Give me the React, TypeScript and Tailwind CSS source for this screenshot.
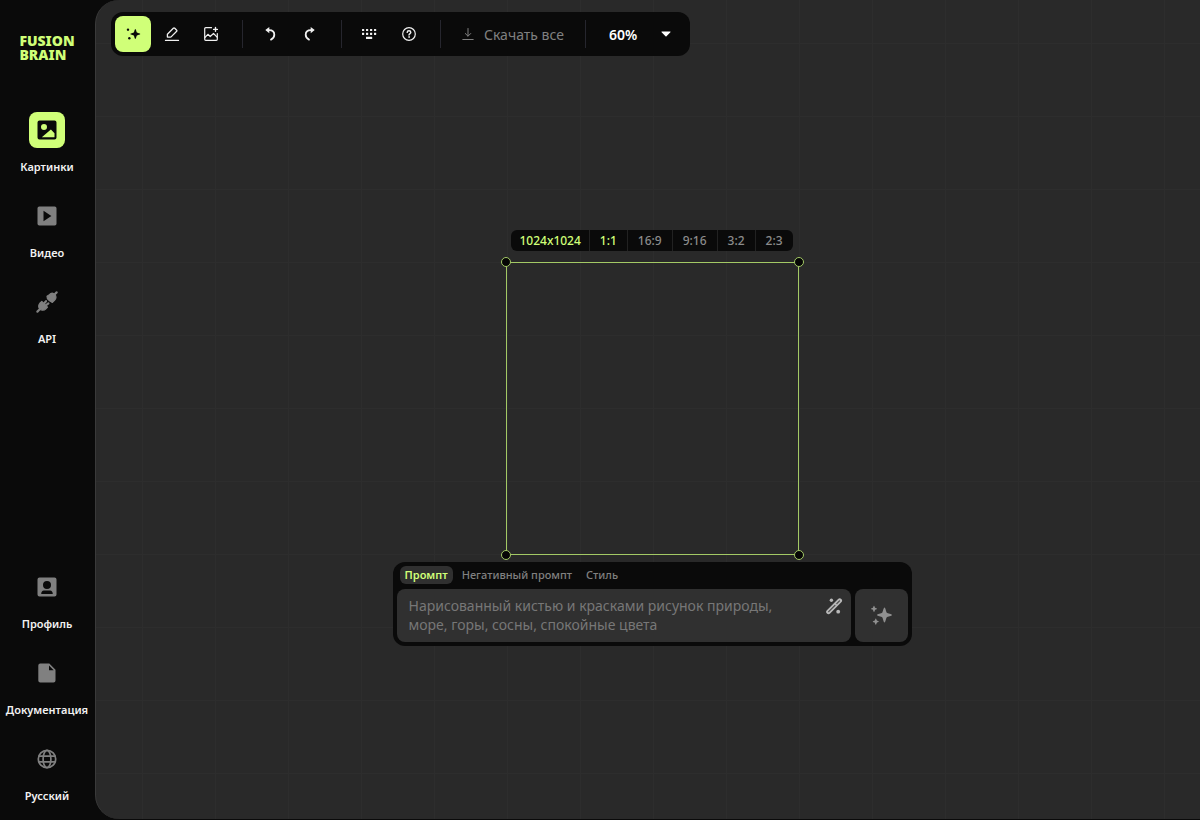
import React, { useState } from "react";

type IconProps = { className?: string };

const SparkleIcon = ({ className, dots = false }: IconProps & { dots?: boolean }) => (
  <svg viewBox="0 0 24 24" className={className} fill="currentColor" aria-hidden="true">
    <path d="M15.500 4.500C16.500 4.500 17.100 9 17.800 9.700 18.500 10.400 23 11 23 12 23 13 18.500 13.600 17.800 14.300 17.100 15 16.500 19.500 15.500 19.500 14.500 19.500 13.900 15 13.200 14.300 12.500 13.600 8 13 8 12 8 11 12.500 10.400 13.200 9.700 13.900 9 14.500 4.500 15.500 4.500z" />
    {dots ? (
      <>
        <circle cx="4.500" cy="5.500" r="1.800" />
        <circle cx="6.500" cy="18.300" r="1.800" />
      </>
    ) : (
      <>
        <path d="M5 2.700c.6 0 .7 1.700 1.100 2 .3.400 2 .5 2 1.100s-1.700.7-2 1.100c-.4.300-.5 2-1.100 2s-.7-1.700-1.100-2c-.3-.4-2-.5-2-1.100s1.700-.7 2-1.100c.4-.3.5-2 1.100-2z" />
        <path d="M6.800 15.500c.6 0 .7 1.700 1.100 2 .3.400 2 .5 2 1.100s-1.700.7-2 1.100c-.4.300-.5 2-1.100 2s-.7-1.700-1.100-2c-.3-.4-2-.5-2-1.100s1.700-.7 2-1.100c.4-.3.5-2 1.100-2z" />
      </>
    )}
  </svg>
);

const EraserIcon = () => (
  <svg viewBox="0 0 16 16" className="size-4" fill="none" stroke="currentColor" strokeWidth="1.300" strokeLinejoin="round" strokeLinecap="round" aria-hidden="true">
    <path d="M1.500 14.400h13" />
    <path d="M9.300 2.300 3.400 8.200v2.900h2.900l.8-.2 5.600-5.600a.8.8 0 0 0 0-1.100l-1.900-1.900a1.100 1.100 0 0 0-1.500 0z" />
  </svg>
);

const AddImageIcon = () => (
  <svg viewBox="0 0 16 16" className="size-4" fill="none" stroke="currentColor" strokeWidth="1.200" strokeLinejoin="round" strokeLinecap="round" aria-hidden="true">
    <path d="M8.500 1.700H2.700a1 1 0 0 0-1 1v10.600a1 1 0 0 0 1 1h10.600a1 1 0 0 0 1-1V7.500" />
    <path d="m1.900 11.500 3-3.200 2.300 2.200 3.300-3 3.600 3.600" />
    <path d="M12.500 1.500v3.800M10.600 3.400h3.800" strokeWidth="1.400" />
  </svg>
);

const UndoIcon = ({ className }: IconProps) => (
  <svg viewBox="0 0 16 16" className={className} fill="none" aria-hidden="true">
    <path d="M5.500 4.200h1.700c3.200 0 5.100 2 5.100 4.600 0 2-1.100 3.700-3.300 4.800" stroke="currentColor" strokeWidth="1.800" strokeLinecap="round" />
    <path d="M3.300 4.100 7.300.9v6.400z" fill="currentColor" />
  </svg>
);

const KeyboardIcon = () => (
  <svg viewBox="0 0 16 16" className="size-4" fill="currentColor" aria-hidden="true">
    {[2.900, 6.700].map((y) =>
      [1, 5, 9, 13].map((x) => <rect key={`${x}-${y}`} x={x} y={y} width="2.200" height="2.200" rx=".3" />)
    )}
    <rect x="5" y="10.800" width="6.200" height="2.200" rx=".3" />
  </svg>
);

const HelpIcon = () => (
  <svg viewBox="0 0 16 16" className="size-4" fill="none" stroke="currentColor" strokeWidth="1.200" strokeLinecap="round" aria-hidden="true">
    <circle cx="8" cy="8" r="6.300" />
    <path d="M6.200 6.400c0-1 .8-1.700 1.800-1.700s1.800.7 1.800 1.700C9.800 7.500 8 7.700 8 9" strokeWidth="1.400" />
    <circle cx="8" cy="11" r=".4" fill="currentColor" strokeWidth=".8" />
  </svg>
);

const DownloadIcon = () => (
  <svg viewBox="0 0 12 12" className="size-3" fill="none" stroke="currentColor" strokeLinecap="round" strokeLinejoin="round" aria-hidden="true">
    <path d="M6 .5v7.500M3.300 5.500 6 8.200l2.700-2.700M.8 11.500h10.400" />
  </svg>
);

const PictureIcon = () => (
  <svg viewBox="0 0 20 20" className="size-5" aria-hidden="true">
    <path fillRule="evenodd" fill="currentColor" d="M2.500.5h15a2 2 0 0 1 2 2v15a2 2 0 0 1-2 2h-15a2 2 0 0 1-2-2v-15a2 2 0 0 1 2-2zM7 4a3 3 0 1 0 0 6 3 3 0 0 0 0-6zM4.800 17.300h12.700v-4L13.900 9.500z" />
  </svg>
);

const VideoIcon = () => (
  <svg viewBox="0 0 20 20" className="size-5" aria-hidden="true">
    <path fillRule="evenodd" fill="currentColor" d="M2.300.5h15.400a1.800 1.800 0 0 1 1.800 1.800v15.400a1.800 1.800 0 0 1-1.800 1.800H2.300a1.800 1.800 0 0 1-1.800-1.800V2.300A1.800 1.800 0 0 1 2.300.5zM6.500 4.800v10.400l7.900-5.200z" />
  </svg>
);

const PlugIcon = () => (
  <svg viewBox="0 0 22 22" className="size-[22px]" fill="currentColor" stroke="currentColor" aria-hidden="true">
    <path d="M11 5.200c0 1.500.4 2.600 1.500 3.700 1.200 1.200 2.600 1.700 3.900 2.500l2.300-2.300c1.700-1.700 1.700-4 .2-5.500s-3.900-1.600-5.600.1z" strokeWidth="1.200" strokeLinejoin="round" />
    <path d="m18.300 3.700 2.300-2.300M1.400 20.600l2.300-2.300" strokeWidth="2.200" strokeLinecap="round" />
    <path d="M5.800 10.500 11.500 16.200 9.900 17.800c-1.800 1.800-4.500 1.900-6.100.3s-1.500-4.300.3-6.100z" strokeWidth="1.200" strokeLinejoin="round" />
    <path d="m7.800 12.700 2.200-2.500M9.500 14.700l2.900-2.300" strokeWidth="2.200" strokeLinecap="round" />
  </svg>
);

const ProfileIcon = () => (
  <svg viewBox="0 0 20 20" className="size-5" aria-hidden="true">
    <path fillRule="evenodd" fill="currentColor" d="M2.500.5h15a2 2 0 0 1 2 2v15a2 2 0 0 1-2 2h-15a2 2 0 0 1-2-2v-15a2 2 0 0 1 2-2zM10 4a4 4 0 1 0 0 8 4 4 0 0 0 0-8zM4.200 17h11.600c0-2-1.200-3.500-2.600-3.500H6.800c-1.400 0-2.600 1.500-2.600 3.500z" />
  </svg>
);

const DocIcon = () => (
  <svg viewBox="0 0 20 20" className="size-5" aria-hidden="true">
    <path fill="currentColor" fillRule="evenodd" d="M3.300.5h9l6.200 6.200v10.800a2 2 0 0 1-2 2H3.300a2 2 0 0 1-2-2v-15a2 2 0 0 1 2-2zM12 2.500v4.700h4.700z" />
  </svg>
);

const GlobeIcon = () => (
  <svg viewBox="0 0 20 20" className="size-5" fill="none" stroke="currentColor" strokeWidth="1.700" aria-hidden="true">
    <circle cx="10" cy="10" r="8.700" />
    <ellipse cx="10" cy="10" rx="3.900" ry="8.700" />
    <path d="M1.500 7.200h17M1.500 12.800h17" />
  </svg>
);

const MagicWandIcon = () => (
  <svg viewBox="0 0 18 18" className="size-[18px]" fill="none" stroke="currentColor" aria-hidden="true">
    <path d="M3.500 14.900 14.700 3.700" strokeWidth="4.600" strokeLinecap="round" />
    <path d="M3.700 14.700 10 8.400M11.800 6.600l2.700-2.700" stroke="#4a4a4a" strokeWidth="1.200" strokeLinecap="round" />
    <circle cx="6.400" cy="3.300" r="1.700" fill="currentColor" stroke="none" />
    <circle cx="13.200" cy="14.700" r="1.900" fill="currentColor" stroke="none" />
  </svg>
);

const NavItem = ({ icon, label, active = false }: { icon: React.ReactNode; label: string; active?: boolean }) => (
  <a href="#" aria-current={active ? "page" : undefined} className="flex flex-col items-center gap-[11px]">
    <span className={`flex size-9 items-center justify-center rounded-lg ${active ? "bg-[#d0ff78] text-[#0a0a0a]" : "text-[#808080]"}`}>
      {icon}
    </span>
    <span className="text-[11px] leading-4 font-semibold text-[#f2f2f2]">{label}</span>
  </a>
);

const ToolButton = ({ label, active = false, children }: { label: string; active?: boolean; children: React.ReactNode }) => (
  <button
    type="button"
    aria-label={label}
    className={`flex size-9 items-center justify-center rounded-lg ${active ? "bg-[#d0ff78] text-[#0a0a0a]" : "text-[#f0f0f0]"}`}
  >
    {children}
  </button>
);

const Divider = () => <span className="mr-[9px] ml-[13px] h-7 w-px bg-[#26262e]" />;

const Handle = ({ className }: { className: string }) => (
  <span className={`absolute size-[10px] rounded-full border border-[#a3c965] bg-[#050505] ${className}`} />
);

const ratios = ["1:1", "16:9", "9:16", "3:2", "2:3"];
const tabs = ["Промпт", "Негативный промпт", "Стиль"];

export default function App() {
  const [ratio, setRatio] = useState("1:1");
  const [tab, setTab] = useState("Промпт");
  const [prompt, setPrompt] = useState("");

  return (
    <div className="flex min-h-screen bg-[#0a0a0a] font-['Noto_Sans','Open_Sans',sans-serif]">
      <aside className="flex w-[95px] shrink-0 flex-col items-center pt-[34px] pr-px pb-4">
        <a href="#" className="flex flex-col text-[14px] leading-[14px] font-black text-[#d0ff78]">
          <span>FUSION</span>
          <span>BRAIN</span>
        </a>
        <nav className="mt-[50px] flex flex-col gap-[23px]">
          <NavItem active icon={<PictureIcon />} label="Картинки" />
          <NavItem icon={<VideoIcon />} label="Видео" />
          <NavItem icon={<PlugIcon />} label="API" />
        </nav>
        <nav className="mt-auto flex flex-col gap-[23px]">
          <NavItem icon={<ProfileIcon />} label="Профиль" />
          <NavItem icon={<DocIcon />} label="Документация" />
          <NavItem icon={<GlobeIcon />} label="Русский" />
        </nav>
      </aside>

      <main className="mb-px flex flex-1 flex-col rounded-l-3xl border-l border-[#3a3a3a] bg-[#292929] bg-[linear-gradient(to_right,#2d2d2d_1px,transparent_1px),linear-gradient(to_bottom,#2d2d2d_1px,transparent_1px)] bg-[size:73px_73px] bg-[position:46px_43px]">
        <header className="mt-3 ml-[15px] flex h-11 items-center self-start rounded-xl bg-[#0a0a0a] p-1">
          <div className="flex gap-[3px]">
            <ToolButton label="Генерация" active>
              <SparkleIcon dots className="size-4" />
            </ToolButton>
            <ToolButton label="Ластик">
              <EraserIcon />
            </ToolButton>
            <ToolButton label="Добавить изображение">
              <AddImageIcon />
            </ToolButton>
          </div>
          <Divider />
          <div className="flex gap-1">
            <ToolButton label="Отменить">
              <UndoIcon className="size-4" />
            </ToolButton>
            <ToolButton label="Повторить">
              <UndoIcon className="size-4 -scale-x-100" />
            </ToolButton>
          </div>
          <Divider />
          <div className="flex gap-1">
            <ToolButton label="Горячие клавиши">
              <KeyboardIcon />
            </ToolButton>
            <ToolButton label="Помощь">
              <HelpIcon />
            </ToolButton>
          </div>
          <Divider />
          <button type="button" className="flex h-9 items-center gap-[10px] pr-2 pl-3 text-[14px] text-[#808080]">
            <DownloadIcon />
            Скачать все
          </button>
          <Divider />
          <div className="relative flex items-center">
            <select
              aria-label="Масштаб"
              defaultValue="60%"
              className="h-9 w-[91px] appearance-none bg-transparent pl-[14px] text-[14px] font-semibold text-white"
            >
              <option>60%</option>
              <option>80%</option>
              <option>100%</option>
            </select>
            <svg viewBox="0 0 10 6" className="pointer-events-none absolute right-[15px] h-[6px] w-[10px] fill-white" aria-hidden="true">
              <path d="M1 .5h8c.5 0 .7.5.4.800L5.500 5.300a.7.7 0 0 1-1 0L.6 1.300C.3 1 .5.5 1 .5z" />
            </svg>
          </div>
        </header>

        <section className="flex flex-1 flex-col items-center justify-center pl-2">
          <div className="flex h-[21px] overflow-hidden rounded-md bg-[#0a0a0a] text-[12px] leading-[21px] font-medium">
            <span className="px-2 text-[#d0ff78]">1024x1024</span>
            {ratios.map((r) => (
              <button
                key={r}
                type="button"
                aria-pressed={r === ratio}
                onClick={() => setRatio(r)}
                className={`border-l border-[#222222] px-[10px] ${r === ratio ? "text-[#d0ff78]" : "text-[#8c8c8c]"}`}
              >
                {r}
              </button>
            ))}
          </div>

          <div className="relative mt-[11px] size-[293px] border border-[#a3c965]">
            <Handle className="-top-[6px] -left-[6px]" />
            <Handle className="-top-[6px] -right-[6px]" />
            <Handle className="-bottom-[6px] -left-[6px]" />
            <Handle className="-right-[6px] -bottom-[6px]" />
          </div>

          <form onSubmit={(e) => e.preventDefault()} className="mt-[7px] w-full max-w-[519px] rounded-xl bg-[#0a0a0a] p-1">
            <div className="flex h-[23px] items-center gap-1 pb-1 pl-[3px] text-[11px] leading-[18px]">
              {tabs.map((t) => (
                <button
                  key={t}
                  type="button"
                  aria-pressed={t === tab}
                  onClick={() => setTab(t)}
                  className={`rounded-md px-[5px] ${t === tab ? "bg-[#303030] font-semibold text-[#d0ff78]" : "font-medium text-[#808080]"}`}
                >
                  {t}
                </button>
              ))}
            </div>
            <div className="flex gap-1">
              <div className="relative flex flex-1 rounded-lg bg-[#303030]">
                <textarea
                  aria-label="Промпт"
                  rows={2}
                  value={prompt}
                  onChange={(e) => setPrompt(e.target.value)}
                  placeholder="Нарисованный кистью и красками рисунок природы, море, горы, сосны, спокойные цвета"
                  className="h-[53px] flex-1 resize-none bg-transparent py-[7px] pr-[60px] pl-3 text-[14px] leading-[19px] text-white outline-none placeholder:text-[#777777]"
                />
                <button type="button" aria-label="Улучшить промпт" className="absolute top-2 right-2 text-[#b8b8b8]">
                  <MagicWandIcon />
                </button>
              </div>
              <button type="submit" aria-label="Сгенерировать" className="flex w-[53px] items-center justify-center rounded-lg bg-[#303030] text-[#909090]">
                <SparkleIcon className="size-6" />
              </button>
            </div>
          </form>
        </section>
      </main>
    </div>
  );
}
